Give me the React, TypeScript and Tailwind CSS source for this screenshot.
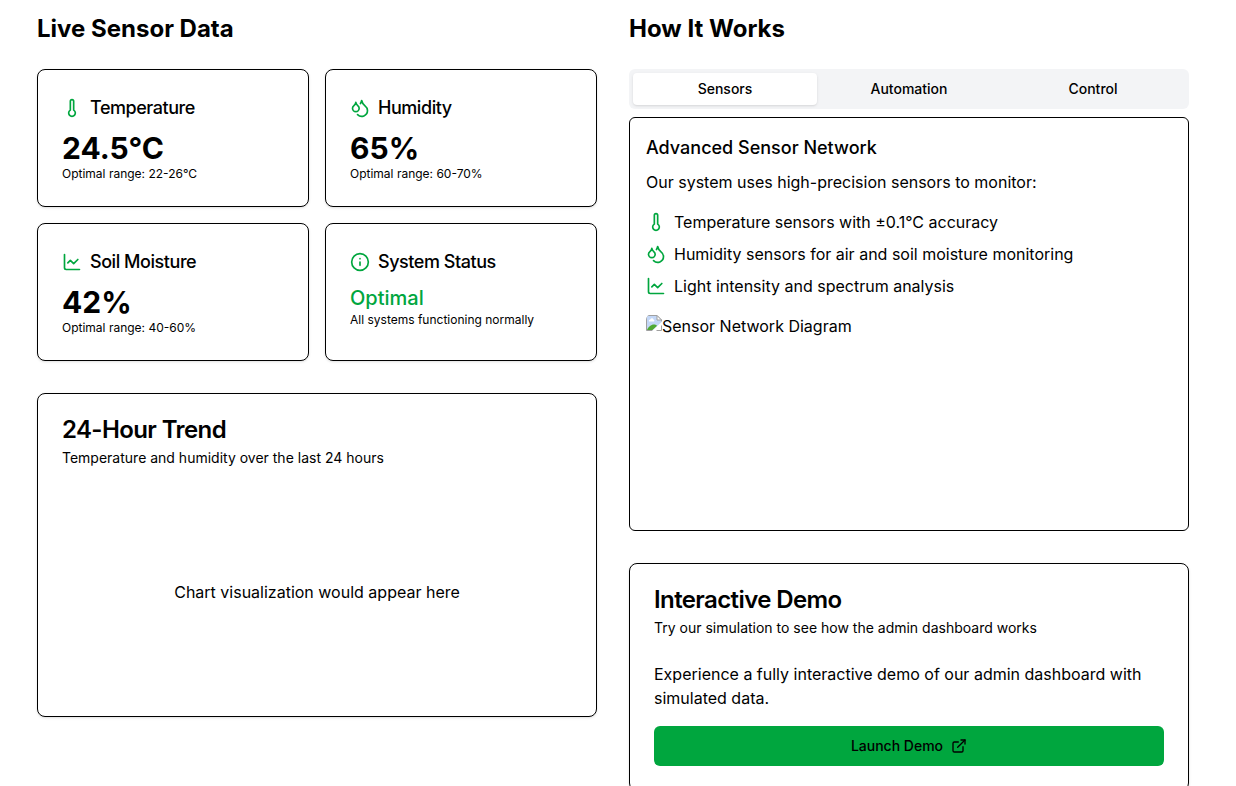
import { useState } from "react";
import type { ReactNode } from "react";
import {
  Droplets,
  ExternalLink,
  Info,
  LineChart,
  Thermometer,
} from "lucide-react";

const ICON = "size-5 shrink-0 text-[#00a63e]";

type SensorCardProps = {
  icon: ReactNode;
  title: string;
  children: ReactNode;
  note: string;
};

function SensorCard({ icon, title, children, note }: SensorCardProps) {
  return (
    <article className="rounded-lg border border-black bg-white p-6 shadow-sm">
      <h3 className="flex items-center gap-2 pb-2 text-lg font-medium tracking-tight">
        {icon}
        {title}
      </h3>
      {children}
      <p className="text-xs">{note}</p>
    </article>
  );
}

function Panel({
  title,
  description,
  children,
}: {
  title: string;
  description: string;
  children: ReactNode;
}) {
  return (
    <section className="rounded-lg border border-black bg-white p-6 shadow-sm">
      <h3 className="text-2xl leading-none font-semibold tracking-tight">
        {title}
      </h3>
      <p className="mt-1.5 mb-6 text-sm">{description}</p>
      {children}
    </section>
  );
}

function MissingImageIcon() {
  return (
    <svg
      className="h-5 w-4 shrink-0"
      viewBox="0 -1 16 20"
      fill="none"
      aria-hidden="true"
    >
      <path d="M0.5 0.5H11L15.5 5V7.5L7 15.5H0.5Z" fill="#c3d7f7" />
      <path
        d="M3 6.5C2.500 5 3.500 4.300 4.300 4.400C4.800 3 7 3 7.400 4.500C8.500 4.600 8.600 6 8 6.500Z"
        fill="#fff"
      />
      <path d="M1 15C2 12 5 9.500 8 9.500C9.500 9.500 10.500 10 11 11L6.500 15Z" fill="#4fa934" />
      <path d="M0.5 15.500V2Q0.500 0.500 2 0.500H11L15.500 5V6.500" stroke="#a0a0a0" />
      <path d="M0.500 15.500H6.500M10.500 15.500H15.500V10.500" stroke="#a0a0a0" />
      <path d="M11 0.500V5H15.500Z" fill="#fff" stroke="#a0a0a0" />
      <path d="M16.500 7.500L7 16.500" stroke="#fff" strokeWidth="2" />
    </svg>
  );
}

const TABS = ["Sensors", "Automation", "Control"];

export default function App() {
  const [active, setActive] = useState("Sensors");

  return (
    <main className="bg-white pt-[13px] pr-[10px] pb-8 font-[Inter,sans-serif] text-base text-black">
      <div className="mx-auto grid max-w-6xl grid-cols-1 items-start gap-8 md:grid-cols-2">
        <div>
          <h2 className="mb-6 text-2xl font-bold">Live Sensor Data</h2>
          <div className="mb-8 grid grid-cols-2 gap-4">
            <SensorCard
              icon={<Thermometer className={ICON} />}
              title="Temperature"
              note="Optimal range: 22-26°C"
            >
              <p className="text-3xl font-bold">24.5°C</p>
            </SensorCard>
            <SensorCard
              icon={<Droplets className={ICON} />}
              title="Humidity"
              note="Optimal range: 60-70%"
            >
              <p className="text-3xl font-bold">65%</p>
            </SensorCard>
            <SensorCard
              icon={<LineChart className={ICON} />}
              title="Soil Moisture"
              note="Optimal range: 40-60%"
            >
              <p className="text-3xl font-bold">42%</p>
            </SensorCard>
            <SensorCard
              icon={<Info className={ICON} />}
              title="System Status"
              note="All systems functioning normally"
            >
              <p className="text-xl font-medium text-[#00a63e]">Optimal</p>
            </SensorCard>
          </div>
          <Panel
            title="24-Hour Trend"
            description="Temperature and humidity over the last 24 hours"
          >
            <div className="flex h-[200px] items-center justify-center">
              <p>Chart visualization would appear here</p>
            </div>
          </Panel>
        </div>

        <div>
          <h2 className="mb-6 text-2xl font-bold">How It Works</h2>
          <div
            role="tablist"
            className="grid h-10 grid-cols-3 rounded-md bg-gray-100 p-1"
          >
            {TABS.map((tab) => (
              <button
                key={tab}
                type="button"
                role="tab"
                aria-selected={tab === active}
                onClick={() => setActive(tab)}
                className={
                  tab === active
                    ? "rounded-sm bg-white text-sm font-medium shadow-sm"
                    : "rounded-sm text-sm font-medium"
                }
              >
                {tab}
              </button>
            ))}
          </div>
          <div
            role="tabpanel"
            className="mt-2 mb-8 rounded-md border border-black p-4"
          >
            <h3 className="mb-2 text-lg font-medium">
              Advanced Sensor Network
            </h3>
            <p className="mb-4">
              Our system uses high-precision sensors to monitor:
            </p>
            <ul className="mb-4 space-y-2">
              <li className="flex items-center gap-2">
                <Thermometer className={ICON} />
                Temperature sensors with ±0.1°C accuracy
              </li>
              <li className="flex items-center gap-2">
                <Droplets className={ICON} />
                Humidity sensors for air and soil moisture monitoring
              </li>
              <li className="flex items-center gap-2">
                <LineChart className={ICON} />
                Light intensity and spectrum analysis
              </li>
            </ul>
            <div className="flex h-[200px] items-start overflow-hidden rounded-md">
              <MissingImageIcon />
              <span>Sensor Network Diagram</span>
            </div>
          </div>
          <Panel
            title="Interactive Demo"
            description="Try our simulation to see how the admin dashboard works"
          >
            <p className="mb-4">
              Experience a fully interactive demo of our admin dashboard with
              simulated data.
            </p>
            <button
              type="button"
              className="flex h-10 w-full items-center justify-center gap-2 rounded-md bg-[#00a63e] text-sm font-medium"
            >
              Launch Demo
              <ExternalLink className="size-4" />
            </button>
          </Panel>
        </div>
      </div>
    </main>
  );
}
